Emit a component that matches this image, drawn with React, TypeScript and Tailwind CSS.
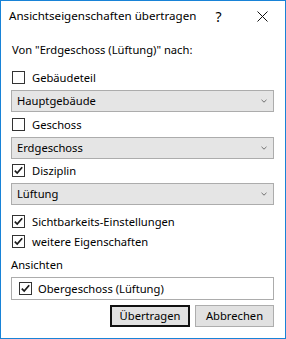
import React from "react";

const font = { fontFamily: '"Segoe UI", "Noto Sans", "Liberation Sans", sans-serif' };

function Check({ checked }: { checked?: boolean }) {
  return (
    <div className="w-[13px] h-[13px] border border-[#333333] bg-white flex items-center justify-center shrink-0">
      {checked && (
        <svg width="11" height="11" viewBox="0 0 11 11">
          <path d="M1.8 5.6 L4.2 8 L9.2 2.2" fill="none" stroke="#1a1a1a" strokeWidth="1.7" />
        </svg>
      )}
    </div>
  );
}

function CheckRow({ label, checked }: { label: string; checked?: boolean }) {
  return (
    <div className="flex items-center gap-[7px] h-[13px] pl-[1px]">
      <Check checked={checked} />
      <span className="leading-[13px] whitespace-nowrap">{label}</span>
    </div>
  );
}

function Combo({ value }: { value: string }) {
  return (
    <div className="h-[22px] border border-[#acacac] bg-[#e5e5e5] flex items-center justify-between pl-[5px] pr-[6px]">
      <span className="leading-[14px]">{value}</span>
      <svg width="6" height="4" viewBox="0 0 6 4">
        <path d="M0.5 0.8 L3 3.2 L5.5 0.8" fill="none" stroke="#707070" strokeWidth="1" />
      </svg>
    </div>
  );
}

export default function App() {
  return (
    <div
      className="w-[286px] h-[339px] bg-white border border-[#1883d7] text-[11.2px] text-black flex flex-col"
      style={font}
    >
      <div className="h-[30px] flex items-center shrink-0">
        <span className="flex-1 pl-[8px] text-[11.6px] whitespace-nowrap">Ansichtseigenschaften übertragen</span>
        <div className="w-[46px] h-[30px] flex items-center justify-center text-[14px]">?</div>
        <div className="w-[46px] h-[30px] flex items-center justify-center">
          <svg width="11" height="11" viewBox="0 0 11 11">
            <path d="M0.5 0.5 L10.5 10.5 M10.5 0.5 L0.5 10.5" stroke="#111" strokeWidth="1" />
          </svg>
        </div>
      </div>
      <div className="flex flex-col pl-[10px] pr-[11px] pt-[9px]">
        <div className="h-[20px] flex items-center pl-[1px] whitespace-nowrap">Von "Erdgeschoss (Lüftung)" nach:</div>
        <div className="mt-[11px]"><CheckRow label="Gebäudeteil" /></div>
        <div className="mt-[6px]"><Combo value="Hauptgebäude" /></div>
        <div className="mt-[6px]"><CheckRow label="Geschoss" /></div>
        <div className="mt-[6px]"><Combo value="Erdgeschoss" /></div>
        <div className="mt-[5px]"><CheckRow label="Disziplin" checked /></div>
        <div className="mt-[6px]"><Combo value="Lüftung" /></div>
        <div className="mt-[10px]"><CheckRow label="Sichtbarkeits-Einstellungen" checked /></div>
        <div className="mt-[7px]"><CheckRow label="weitere Eigenschaften" checked /></div>
        <div className="h-[16px] flex items-center mt-[9px]">Ansichten</div>
        <div className="border border-[#acacac] h-[23px] mt-[4px] flex items-center pl-[7px] gap-[6px]">
          <Check checked />
          <span className="leading-[14px]">Obergeschoss (Lüftung)</span>
        </div>
        <div className="flex justify-end gap-[5px] mt-[5px]">
          <div className="w-[80px] h-[22px] border-2 border-[#111] bg-[#e1e1e1] flex items-center justify-center leading-[14px]">Übertragen</div>
          <div className="w-[79px] h-[22px] border border-[#adadad] bg-[#e1e1e1] flex items-center justify-center leading-[14px]">Abbrechen</div>
        </div>
      </div>
    </div>
  );
}
